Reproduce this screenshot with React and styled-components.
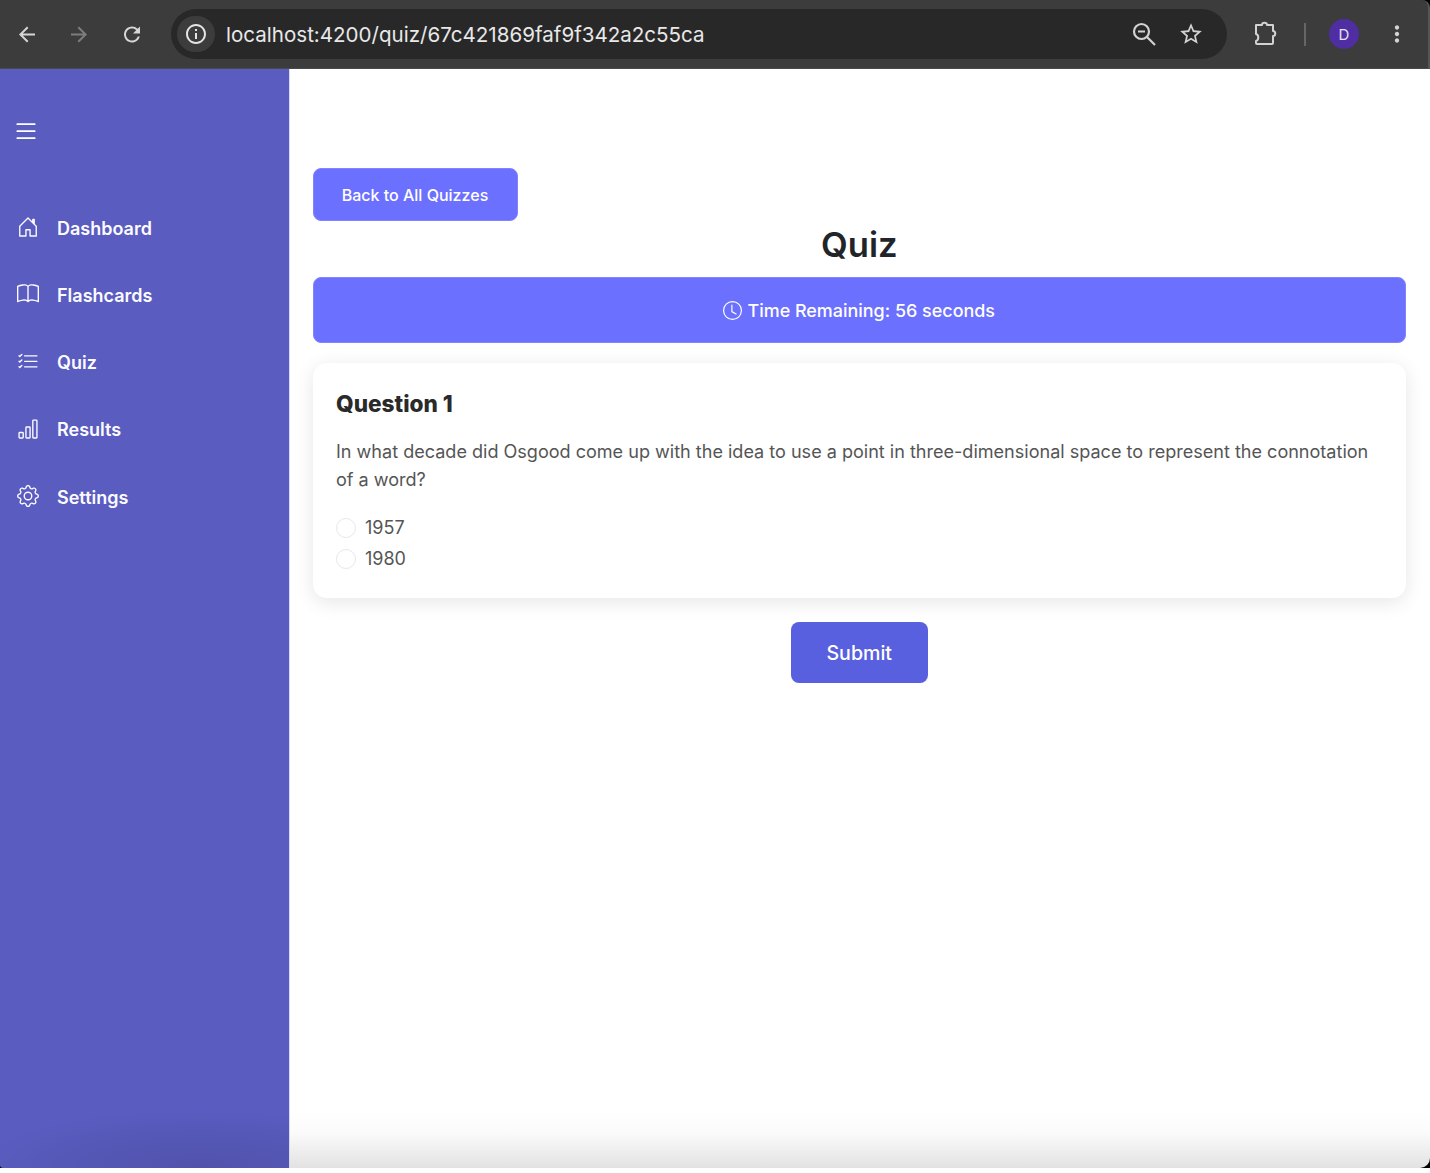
import React from "react";
import styled, { createGlobalStyle } from "styled-components";
import { BsHouseDoor, BsBook, BsListCheck, BsBarChart, BsGear, BsClock, BsList } from "react-icons/bs";
import { MdArrowBack, MdArrowForward, MdRefresh, MdInfoOutline, MdStarBorder, MdMoreVert } from "react-icons/md";

const GlobalStyle = createGlobalStyle`
  * {
    box-sizing: border-box;
  }
  html, body {
    margin: 0;
    padding: 0;
    background: #fff;
  }
  body {
    font-family: Inter, "Liberation Sans", sans-serif;
  }
`;

const Frame = styled.div`
  width: 1430px;
  height: 1168px;
  display: flex;
  flex-direction: column;
  overflow: hidden;
  background: #000;
`;

const BottomShade = styled.div`
  position: absolute;
  left: 0;
  right: 0;
  bottom: 0;
  height: 60px;
  pointer-events: none;
  background: linear-gradient(to bottom, rgba(0, 0, 0, 0), rgba(0, 0, 0, 0.015) 40%, rgba(0, 0, 0, 0.115));
`;

const Toolbar = styled.div`
  height: 69px;
  flex: none;
  display: flex;
  align-items: center;
  padding: 0 0 0 15px;
  background: #3c3c3c;
  color: #d6d6d6;
  border-bottom: 1px solid #4a4a4a;
  border-right: 2px solid #565656;
  border-top-right-radius: 8px;
`;

const NavButton = styled.div`
  width: 24px;
  height: 24px;
  margin-right: ${(props) => props.$gap}px;
  display: flex;
  align-items: center;
  justify-content: center;
  font-size: 25px;
  color: ${(props) => (props.$dim ? "#7d7d7d" : "#d6d6d6")};
`;

const AddressBar = styled.div`
  width: 1056px;
  height: 50px;
  margin-left: 27px;
  padding: 0 23px 0 6px;
  display: flex;
  align-items: center;
  background: #282828;
  border-radius: 25px;
`;

const InfoChip = styled.div`
  width: 38px;
  height: 36px;
  border-radius: 18px;
  background: #3c3c3c;
  display: flex;
  align-items: center;
  justify-content: center;
  font-size: 24px;
  color: #e4e4e4;
`;

const Url = styled.div`
  margin-left: 11px;
  flex: 1;
  font-size: 20.57px;
  color: #e8e8e8;
  white-space: nowrap;
`;

const BarIcon = styled.div`
  width: 26px;
  height: 26px;
  margin-left: ${(props) => props.$gap || 0}px;
  display: flex;
  align-items: center;
  justify-content: center;
  font-size: 28px;
  color: #d2d2d2;
`;

const Divider = styled.div`
  width: 2px;
  height: 23px;
  margin-left: 25px;
  background: #666;
`;

const Avatar = styled.div`
  width: 30px;
  height: 30px;
  margin-left: 23px;
  border-radius: 50%;
  background: #4f2ea3;
  color: #e6e0f5;
  font-size: 15px;
  display: flex;
  align-items: center;
  justify-content: center;
`;

const Body = styled.div`
  flex: 1;
  display: flex;
  min-height: 0;
  overflow: hidden;
  border-bottom-right-radius: 10px;
  border-bottom-left-radius: 3px;
`;

const Sidebar = styled.nav`
  width: 289px;
  flex: none;
  padding: 50px 18px 0;
  background:
    radial-gradient(ellipse 230px 60px at 200px 100%, rgba(0, 0, 0, 0.11), rgba(0, 0, 0, 0)),
    #5a5cc0;
  color: #fff;
`;

const MenuToggle = styled.div`
  height: 24px;
  margin-bottom: 51.5px;
  display: flex;
  align-items: center;
  font-size: 28px;
  margin-left: -6px;
`;

const NavList = styled.div`
  display: flex;
  flex-direction: column;
`;

const NavItem = styled.div`
  height: 67.25px;
  display: flex;
  align-items: center;
  gap: 18px;
  font-size: 18px;
  font-weight: 600;
  color: #fbfbff;
  svg {
    width: 22px;
    height: 22px;
    flex: none;
    margin: -2px 0 0 -1px;
  }
`;

const Main = styled.main`
  position: relative;
  flex: 1;
  min-width: 0;
  padding: 99px 24px 0 22.5px;
  background: #fff;
  border-left: 1px solid #d8d8f0;
`;

const BackButton = styled.button`
  display: block;
  width: 205px;
  height: 53px;
  border: 1px solid #8184ff;
  border-radius: 8px;
  background: #6c70ff;
  color: #fff;
  font-family: inherit;
  font-size: 16px;
  font-weight: 500;
`;

const Title = styled.h1`
  margin: 0;
  height: 56px;
  line-height: 47px;
  font-size: 34.6px;
  font-weight: 600;
  text-align: center;
  color: #212529;
`;

const Timer = styled.div`
  height: 66px;
  display: flex;
  align-items: center;
  justify-content: center;
  gap: 5px;
  border: 1px solid #8184ff;
  border-radius: 8px;
  background: #6c70ff;
  color: #fff;
  font-size: 17.95px;
  font-weight: 500;
  svg {
    width: 19px;
    height: 19px;
  }
`;

const Card = styled.section`
  margin-top: 20px;
  height: 235px;
  padding: 24px 23.5px;
  border-radius: 14px;
  background: #fff;
  box-shadow: 0 4px 20px rgba(0, 0, 0, 0.1);
`;

const QuestionTitle = styled.h3`
  margin: 0 0 17px;
  line-height: 34px;
  font-size: 22.6px;
  font-weight: 800;
  color: #2a2a2a;
`;

const QuestionText = styled.p`
  margin: 0 0 18px;
  font-size: 18.06px;
  line-height: 28px;
  color: #555;
`;

const Option = styled.label`
  height: 31px;
  display: flex;
  align-items: center;
  gap: 9px;
  font-size: 18px;
  color: #555;
`;

const Radio = styled.span`
  width: 20px;
  height: 20px;
  border-radius: 50%;
  border: 1px solid #e8e8e8;
  background: #fff;
`;

const SubmitRow = styled.div`
  margin-top: 24px;
  display: flex;
  justify-content: center;
`;

const SubmitButton = styled.button`
  width: 137px;
  height: 60.5px;
  padding: 1px 0 0;
  border: none;
  border-radius: 8px;
  background: #5860e0;
  color: #fff;
  font-family: inherit;
  font-size: 19.6px;
  font-weight: 500;
`;

const navItems = [
  { label: "Dashboard", Icon: BsHouseDoor },
  { label: "Flashcards", Icon: BsBook },
  { label: "Quiz", Icon: BsListCheck },
  { label: "Results", Icon: BsBarChart },
  { label: "Settings", Icon: BsGear },
];

const ZoomOutIcon = () => (
  <svg width="26" height="26" viewBox="0 0 26 26" fill="none" stroke="currentColor" strokeWidth="2.2">
    <circle cx="10.500" cy="10.500" r="7.500" />
    <path d="M7 10.500h7M16 16l8 8" />
  </svg>
);

const ExtensionIcon = () => (
  <svg width="26" height="26" viewBox="0 0 26 26" fill="none" stroke="currentColor" strokeWidth="2" strokeLinejoin="round">
    <path d="M3 4h6c0-3 5-3 5 0h6v6c3 0 3 5 0 5v7c0 .6-.4 1-1 1H4c-.6 0-1-.4-1-1v-2c3-.5 3-6.500 0-7z" />
  </svg>
);

const App = () => {
  return (
    <>
      <GlobalStyle />
      <Frame>
        <Toolbar>
          <NavButton $gap={28}><MdArrowBack /></NavButton>
          <NavButton $dim $gap={29}><MdArrowForward /></NavButton>
          <NavButton $gap={0}><MdRefresh /></NavButton>
          <AddressBar>
            <InfoChip><MdInfoOutline /></InfoChip>
            <Url>localhost:4200/quiz/67c421869faf9f342a2c55ca</Url>
            <BarIcon><ZoomOutIcon /></BarIcon>
            <BarIcon $gap={21}><MdStarBorder /></BarIcon>
          </AddressBar>
          <BarIcon $gap={26}><ExtensionIcon /></BarIcon>
          <Divider />
          <Avatar>D</Avatar>
          <BarIcon $gap={25}><MdMoreVert /></BarIcon>
        </Toolbar>
        <Body>
          <Sidebar>
            <MenuToggle><BsList /></MenuToggle>
            <NavList>
              {navItems.map(({ label, Icon }) => (
                <NavItem key={label}>
                  <Icon />
                  {label}
                </NavItem>
              ))}
            </NavList>
          </Sidebar>
          <Main>
            <BackButton>Back to All Quizzes</BackButton>
            <Title>Quiz</Title>
            <Timer>
              <BsClock />
              Time Remaining: 56 seconds
            </Timer>
            <Card>
              <QuestionTitle>Question 1</QuestionTitle>
              <QuestionText>
                In what decade did Osgood come up with the idea to use a point in three-dimensional space to represent the connotation of a word?
              </QuestionText>
              {["1957", "1980"].map((year) => (
                <Option key={year}>
                  <Radio />
                  {year}
                </Option>
              ))}
            </Card>
            <SubmitRow>
              <SubmitButton>Submit</SubmitButton>
            </SubmitRow>
            <BottomShade />
          </Main>
        </Body>
      </Frame>
    </>
  );
};

export default App;
